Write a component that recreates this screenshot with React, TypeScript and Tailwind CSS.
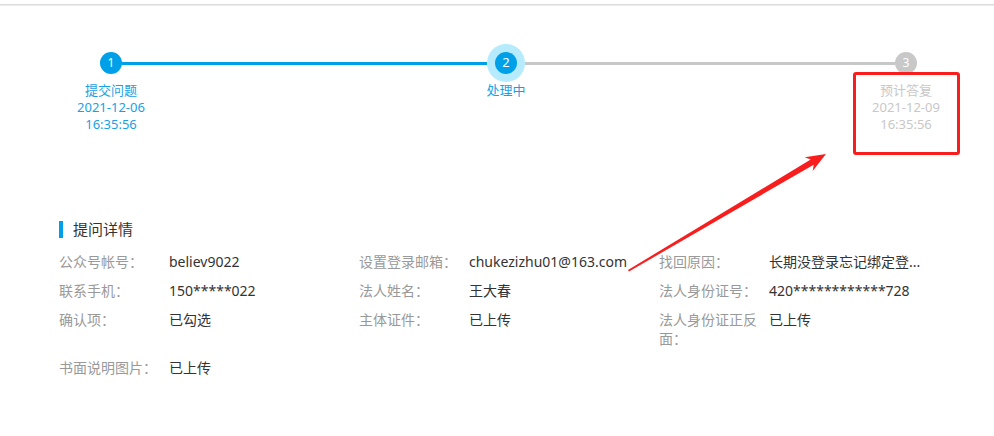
const BLUE = "#00a0e9";

type StepProps = {
  n: number;
  title: string;
  date?: string;
  time?: string;
  state: "done" | "active" | "todo";
  first?: boolean;
  last?: boolean;
};

function Step({ n, title, date, time, state, first, last }: StepProps) {
  const textColor = state === "todo" ? "text-[#c8c8c8]" : "text-[#1a9fe4]";
  const leftLine = first ? "bg-transparent" : state === "todo" ? "bg-[#c8c8c8]" : "bg-[#00a0e9]";
  const rightLine = last ? "bg-transparent" : state === "done" ? "bg-[#00a0e9]" : "bg-[#c8c8c8]";
  return (
    <div className="flex w-[100px] flex-col items-center">
      <div className="flex h-[38px] w-full items-center">
        <div className={`h-[3px] flex-1 ${leftLine}`} />
        {state === "active" ? (
          <div className="flex h-[38px] w-[38px] items-center justify-center rounded-full bg-[#b5ebfc]">
            <div className="flex h-[22px] w-[22px] items-center justify-center rounded-full bg-[#00a0e9] text-[13px] text-white">
              {n}
            </div>
          </div>
        ) : (
          <div
            className={`flex h-[22px] w-[22px] items-center justify-center rounded-full text-[12px] text-white ${
              state === "todo" ? "bg-[#c8c8c8]" : "bg-[#00a0e9]"
            }`}
          >
            {n}
          </div>
        )}
        <div className={`h-[3px] flex-1 ${rightLine}`} />
      </div>
      <div className={`whitespace-nowrap text-center text-[13px] leading-[17px] ${textColor}`}>
        <p>{title}</p>
        {date && <p>{date}</p>}
        {time && <p>{time}</p>}
      </div>
    </div>
  );
}

const rows: [string, string][][] = [
  [
    ["公众号帐号：", "believ9022"],
    ["设置登录邮箱：", "chukezizhu01@163.com"],
    ["找回原因：", "长期没登录忘记绑定登..."],
  ],
  [
    ["联系手机：", "150*****022"],
    ["法人姓名：", "王大春"],
    ["法人身份证号：", "420************728"],
  ],
  [
    ["确认项：", "已勾选"],
    ["主体证件：", "已上传"],
    ["法人身份证正反面：", "已上传"],
  ],
  [["书面说明图片：", "已上传"]],
];

export default function App() {
  return (
    <div
      className="relative h-[436px] w-[994px] overflow-hidden bg-white"
      style={{ fontFamily: '"Noto Sans", "Noto Sans CJK SC", sans-serif' }}
    >
      <div className="mt-[4px] h-[2px] border-t border-b border-t-[#dcdcdc] border-b-[#ececec]" />

      {/* steps */}
      <div className="ml-[61px] mt-[38px] flex w-[895px] items-start">
        <Step n={1} title="提交问题" date="2021-12-06" time="16:35:56" state="done" first />
        <div className="flex h-[38px] w-[295px] items-center">
          <div className="h-[3px] w-full bg-[#00a0e9]" />
        </div>
        <Step n={2} title="处理中" state="active" />
        <div className="flex h-[38px] flex-1 items-center">
          <div className="h-[3px] w-full bg-[#c8c8c8]" />
        </div>
        <Step n={3} title="预计答复" date="2021-12-09" time="16:35:56" state="todo" last />
      </div>

      {/* details */}
      <div className="ml-[59px] mt-[86px]">
        <div className="flex items-center">
          <div className="h-[17px] w-[4px]" style={{ backgroundColor: BLUE }} />
          <h3 className="ml-[10px] text-[15px] leading-[20px] text-[#333]">提问详情</h3>
        </div>
        <div className="mt-[13px] flex flex-col gap-[10px] text-[14px] leading-[19px]">
          {rows.map((row, i) => (
            <div key={i} className="grid w-[900px] grid-cols-3">
              {row.map(([label, value]) => (
                <div key={label} className="flex">
                  <span className="w-[110px] shrink-0 pr-[10px] text-[#999]">{label}</span>
                  <span className="whitespace-nowrap text-[#333]">{value}</span>
                </div>
              ))}
            </div>
          ))}
        </div>
      </div>

      {/* annotation */}
      <div className="absolute left-[853px] top-[72px] h-[83px] w-[107px] rounded-[3px] border-[3px] border-[#f81e1e]" />
      <svg className="pointer-events-none absolute left-0 top-0" width="994" height="436">
        <polygon
          fill="#f81e1e"
          points="628,270 810.7,159.5 804.7,157.2 826,154 812.7,171 813.7,164.7 629,271.5"
        />
      </svg>
    </div>
  );
}
